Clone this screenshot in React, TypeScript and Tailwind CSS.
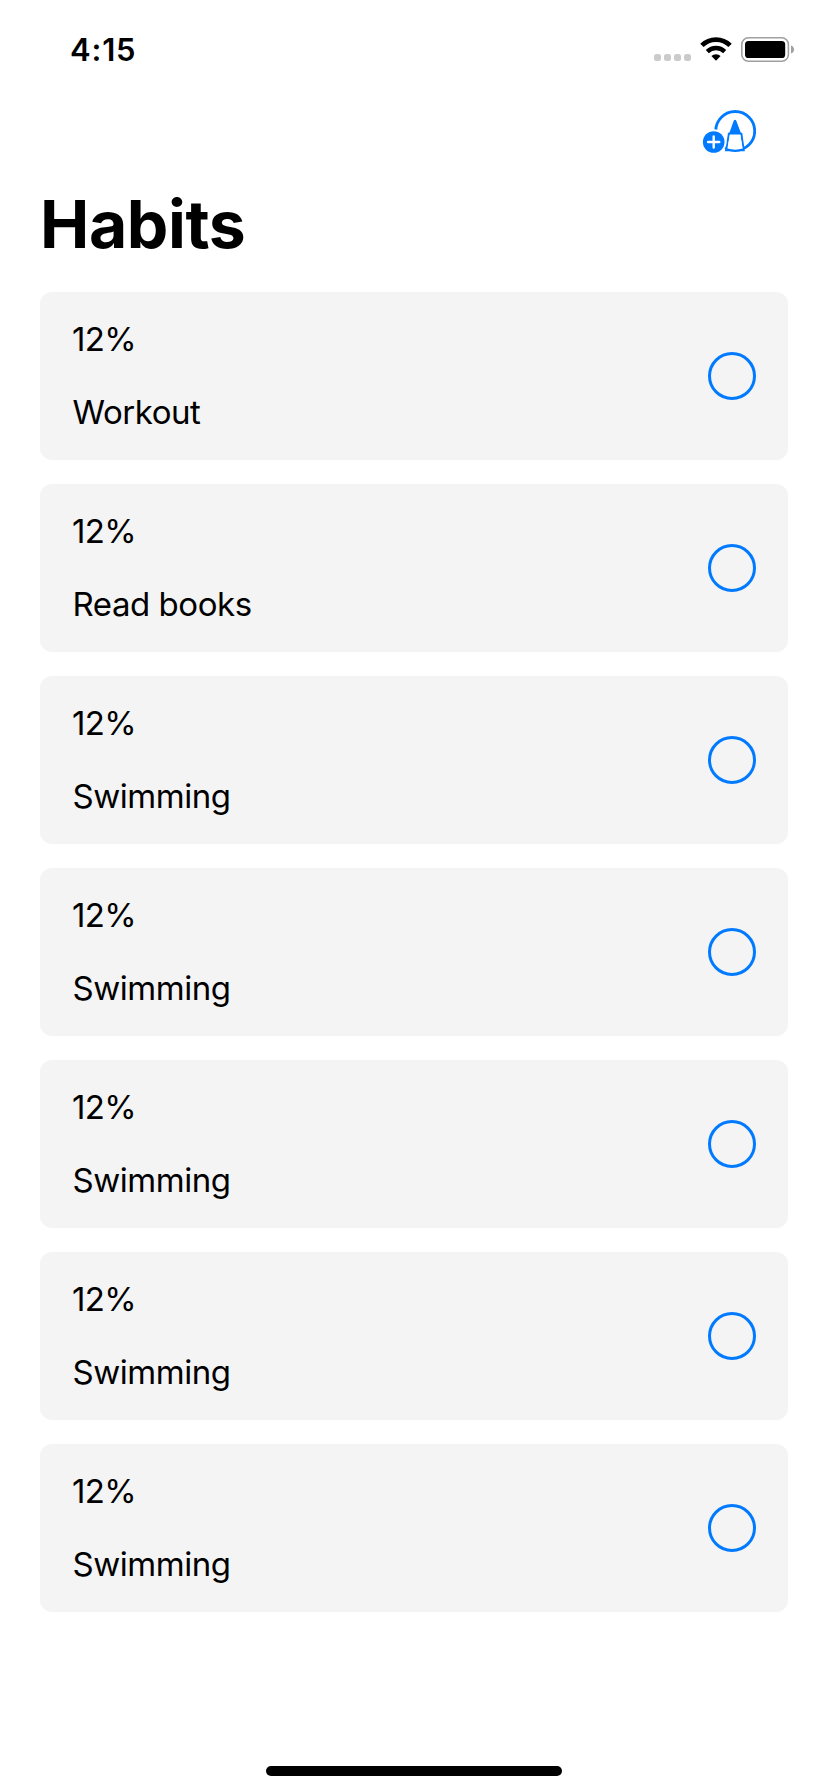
const habits = [
  "Workout",
  "Read books",
  "Swimming",
  "Swimming",
  "Swimming",
  "Swimming",
  "Swimming",
];

function WifiIcon() {
  return (
    <svg width="32" height="24" viewBox="0 0 32 24" fill="none" stroke="#000">
      <path d="M1.9 8.4a20 20 0 0 1 28.2 0" strokeWidth="4.7" />
      <path d="M7.3 14.6a12.3 12.3 0 0 1 17.4 0" strokeWidth="4.4" />
      <path d="M16 23.8l-4.6-4.7a6.5 6.5 0 0 1 9.2 0z" fill="#000" stroke="none" />
    </svg>
  );
}

function BatteryIcon() {
  return (
    <svg width="54" height="26" viewBox="0 0 54 26">
      <rect x="0.8" y="0.8" width="46.6" height="23.4" rx="6.6" fill="none" stroke="#a0a0a0" strokeWidth="1.6" />
      <rect x="4" y="4" width="40.2" height="17" rx="3.6" fill="#000" />
      <path d="M50 8.4c1.9.5 3 2.1 3 4.1s-1.1 3.6-3 4.1z" fill="#a0a0a0" />
    </svg>
  );
}

function AddHabitIcon() {
  return (
    <svg width="54" height="46" viewBox="0 0 54 46" fill="none">
      <circle cx="33.2" cy="22" r="19.5" stroke="#007aff" strokeWidth="2.8" />
      <path d="M27 24.3l-2.9 17h17.6l-2.4-17" stroke="#007aff" strokeWidth="2" />
      <path d="M27.9 25.6h10.2l2.6 14q-7.5 2.2-15.2 0z" fill="#fff" />
      <path d="M25.8 25.6l.2-1.6 1.6-.8 4.2-11.6q1.2-1.6 2.4 0L38.6 23.2l1.4.8.4 1.6z" fill="#007aff" />
      <circle cx="11.7" cy="33" r="12.8" fill="#fff" />
      <circle cx="11.7" cy="33" r="10.8" fill="#007aff" />
      <path d="M11.7 27.4v11.2M6.1 33h11.2" stroke="#fff" strokeWidth="2.4" strokeLinecap="round" />
    </svg>
  );
}

export default function App() {
  return (
    <div className="flex h-[1792px] w-[828px] flex-col bg-white font-['Inter',sans-serif] text-black">
      <header className="flex h-[100px] items-start justify-between pt-[37px] pr-[33px] pl-[70px]">
        <div className="-mt-[7px] text-[31px] leading-[40px] font-semibold tracking-[0.8px]">4:15</div>
        <div className="flex items-start">
          <div className="mt-[17px] mr-[9px] flex gap-[3px]">
            {[0, 1, 2, 3].map((dot) => (
              <span key={dot} className="size-[7px] rounded-[2.5px] bg-[#cbcbcb]" />
            ))}
          </div>
          <WifiIcon />
          <div className="ml-[9px]">
            <BatteryIcon />
          </div>
        </div>
      </header>

      <div className="flex h-[84px] items-start justify-end pt-[9px] pr-[72px]">
        <button type="button" aria-label="Add habit">
          <AddHabitIcon />
        </button>
      </div>

      <h1 className="h-[108px] pl-[40px] text-[66px] leading-[80px] font-bold tracking-[-0.4px]">Habits</h1>

      <ul className="flex flex-col gap-6 px-10">
        {habits.map((name, index) => (
          <li key={index} className="flex h-[168px] items-center justify-between rounded-xl bg-[#f4f4f4] px-8">
            <div className="flex flex-col gap-[33px] pb-[1px] text-[33px] leading-[40px]">
              <span className="tracking-[-0.6px]">12%</span>
              <span className="pl-[0.5px] tracking-[-0.45px]">{name}</span>
            </div>
            <button type="button" aria-label={name} className="size-12 rounded-full border-[3px] border-[#007aff]" />
          </li>
        ))}
      </ul>

      <div className="mt-auto mb-4 h-[10px] w-[296px] self-center rounded-full bg-black" />
    </div>
  );
}
